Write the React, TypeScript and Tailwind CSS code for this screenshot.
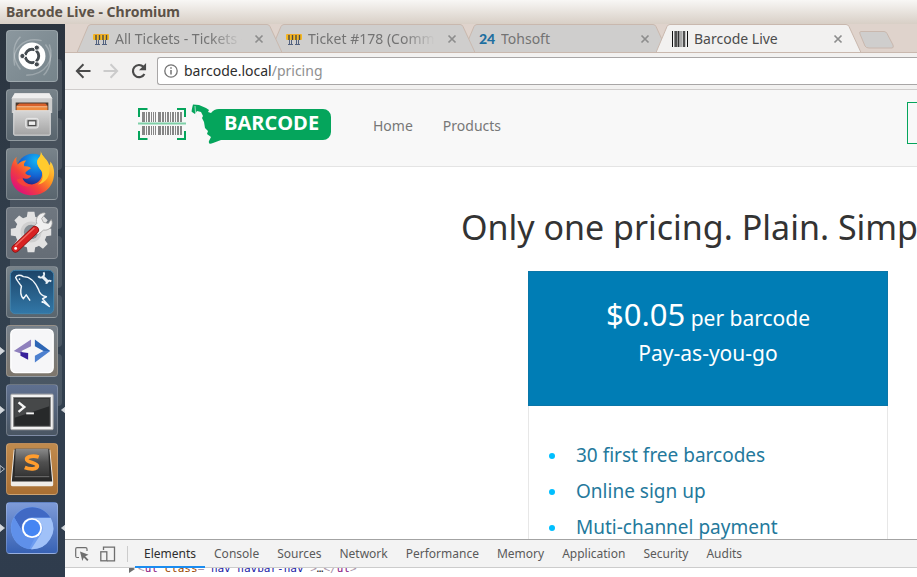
import type { ReactNode } from "react";

const uiFont = "font-['Noto_Sans','Open_Sans',sans-serif]";

/* ---------- Launcher icons ---------- */

function DashIcon() {
  return (
    <svg viewBox="0 0 52 52" className="size-full">
      <g fill="none" stroke="#ffffff" strokeOpacity="0.25" strokeWidth="1.500">
        <path d="M8 36C4 18 18 6 36 10" />
        <path d="M44 14c6 16-4 32-24 32" />
        <path d="M14 6C4 16 6 30 14 40" />
        <path d="M38 46c8-8 10-22 2-32" />
      </g>
      <circle cx="26" cy="26" r="14" fill="#fff" />
      <circle cx="26" cy="26" r="7" fill="none" stroke="#444b50" strokeWidth="3" />
      <path d="M26 26H15M26 26l6-10.400M26 26l6 10.400" stroke="#fff" strokeWidth="1.400" />
      <circle cx="26" cy="26" r="5" fill="#fff" />
      <g fill="#444b50" stroke="#fff" strokeWidth="1">
        <circle cx="16" cy="26" r="2.700" />
        <circle cx="31" cy="17.300" r="2.700" />
        <circle cx="31" cy="34.700" r="2.700" />
      </g>
    </svg>
  );
}

function FilesIcon() {
  return (
    <svg viewBox="0 0 52 52" className="size-full">
      <defs>
        <linearGradient id="drawer" x1="0" y1="0" x2="0" y2="1">
          <stop offset="0" stopColor="#d6d6d6" />
          <stop offset="1" stopColor="#a3a3a3" />
        </linearGradient>
      </defs>
      <path d="M8 3.500h36l3 5V24H5V8.500z" fill="#cdcdcd" />
      <path d="M8 3.500h36l3 5H5z" fill="#eeeeee" />
      <rect x="9" y="13" width="34" height="10" fill="#4a3b30" />
      <path d="M10 16l3-2h27l2 2v7H10z" fill="#d9622c" />
      <path d="M10 18h32v4H10z" fill="#f08a3c" />
      <path d="M10 17.500h32" stroke="#fbd2a2" />
      <rect x="7" y="21.500" width="38" height="25.500" rx="1" fill="url(#drawer)" stroke="#e2e2e2" />
      <rect x="19.500" y="29.500" width="13" height="10" rx="2" fill="#c9c9c9" stroke="#ececec" />
      <rect x="22" y="32" width="8" height="5" fill="#eee" stroke="#4c4c4c" strokeWidth="1.300" />
    </svg>
  );
}

function FirefoxIcon() {
  return (
    <svg viewBox="0 0 52 52" className="size-full">
      <defs>
        <linearGradient id="fox" x1="0.900" y1="0.100" x2="0.200" y2="0.900">
          <stop offset="0" stopColor="#ffe14a" />
          <stop offset="0.400" stopColor="#ff9a1f" />
          <stop offset="0.700" stopColor="#f4433a" />
          <stop offset="1" stopColor="#e01574" />
        </linearGradient>
        <radialGradient id="globe" cx="0.600" cy="0.200" r="0.800">
          <stop offset="0" stopColor="#12b5f5" />
          <stop offset="0.600" stopColor="#1463d2" />
          <stop offset="1" stopColor="#24237c" />
        </radialGradient>
      </defs>
      <circle cx="27" cy="22" r="17" fill="url(#globe)" />
      <path
        d="M35 2c1 4-1 6-3 9-2 4 1 8 4 12 2 6-2 13-10 14-5 0-9-3-10-7 3 2 7 1 9-2-1-1-4 0-6-3 1-2 3-3 6-5-2-2-5-2-7-2-1-2 0-4 2-6-4 0-7 2-9 4-1-2-2-4-1-8-3 3-5 7-6 14-2 15 7 26 22 26 14 0 23-10 23-23 0-4-1-9-4-12 0 2 0 3-1 4C43 11 36 8 35 2z"
        fill="url(#fox)"
      />
      <path d="M35 2c1 4-1 6-3 9-2 4 1 8 4 12 3 6 0 12-4 14 9-2 13-9 12-17C43 11 36 8 35 2z" fill="#ffcb2e" />
      <path d="M16 30c1 6 7 9 13 7-6 4-16 2-19-5z" fill="#f4433a" />
    </svg>
  );
}

function SettingsIcon() {
  const teeth = [0, 45, 90, 135, 180, 225, 270, 315];
  return (
    <svg viewBox="0 0 52 52" className="size-full">
      <g fill="#e2e2e2">
        {teeth.map((a) => (
          <path key={a} d="M21 13l1.500-9h7l1.500 9z" transform={`rotate(${a} 25 25) translate(-1 0)`} />
        ))}
        <circle cx="25" cy="25" r="16.500" />
      </g>
      <circle cx="25" cy="25" r="11" fill="#cfcfcf" />
      <circle cx="25" cy="25" r="7.500" fill="#858d93" />
      <path
        d="M26 21l5-5c-2-5 2-11 8-11l1 1-4 5 2 4 5 1 3-4c3 5-1 12-8 11l-6 5z"
        fill="#f0f0f0"
        stroke="#9b9b9b"
        strokeWidth="0.800"
      />
      <path d="M9 42L29 23" stroke="#8e1010" strokeWidth="8.500" strokeLinecap="round" />
      <path d="M9 42L29 23" stroke="#d82222" strokeWidth="7" strokeLinecap="round" />
      <path d="M9 39L28 21" stroke="#f06a60" strokeWidth="1.500" strokeLinecap="round" />
      <circle cx="9" cy="42" r="1.500" fill="#fff" />
    </svg>
  );
}

function WorkbenchIcon() {
  return (
    <svg viewBox="0 0 52 52" className="size-full">
      <defs>
        <linearGradient id="sea" x1="0" y1="0" x2="0" y2="1">
          <stop offset="0" stopColor="#1c4468" />
          <stop offset="1" stopColor="#3278a8" />
        </linearGradient>
      </defs>
      <rect x="3.500" y="3.500" width="45" height="45" rx="5" fill="url(#sea)" stroke="#3f82ac" />
      <path
        d="M24 35l-4-6-3 4c-3-3-3-9-2-13-2-3-5-6-6-9 1-3 5-3 8-1 8 0 13 7 16 14 1 4 4 6 8 7l-4 2 7 8-7-5-1 1"
        fill="none"
        stroke="#f2f7fb"
        strokeWidth="1.500"
        strokeLinejoin="round"
      />
      <circle cx="13" cy="12.500" r="0.900" fill="#f2f7fb" />
      <path d="M37 10l6 6" stroke="#e8eff5" strokeWidth="3" />
      <path d="M32.500 9.500a3 3 0 005.500-4M41 17.500a3 3 0 015-2.500" fill="none" stroke="#e8eff5" strokeWidth="2" />
    </svg>
  );
}

function CodeIcon() {
  return (
    <svg viewBox="0 0 52 52" className="size-full">
      <rect x="4" y="3.500" width="44" height="45" rx="5" fill="#f6f6f8" stroke="#fff" strokeWidth="1.500" />
      <path d="M25 14v7l-10 5 3 4-11-4z" fill="#8f80bd" />
      <path d="M14 27l8 1v7l-8-4z" fill="#38219b" />
      <path d="M29 14v7l9 5h7z" fill="#2d66b5" />
      <path d="M45 26h-7l-9 5v7z" fill="#4d80cf" />
    </svg>
  );
}

function TerminalIcon() {
  return (
    <svg viewBox="0 0 52 52" className="size-full">
      <rect x="4" y="9.500" width="44" height="37" rx="1" fill="#f2f2f2" stroke="#a8a8a8" />
      <rect x="7" y="13" width="38" height="30" fill="#27292a" stroke="#777" />
      <path d="M8 14h36v8L8 34z" fill="#464849" />
      <path d="M12 18l6 5-6 5" fill="none" stroke="#f6f6f6" strokeWidth="2.500" />
      <path d="M20 29.500h8" stroke="#f6f6f6" strokeWidth="2" />
    </svg>
  );
}

function SublimeIcon() {
  return (
    <svg viewBox="0 0 52 52" className="size-full">
      <defs>
        <linearGradient id="key" x1="0" y1="0" x2="0" y2="1">
          <stop offset="0" stopColor="#8a8a8a" />
          <stop offset="0.500" stopColor="#505050" />
          <stop offset="1" stopColor="#363636" />
        </linearGradient>
      </defs>
      <path d="M7 6h38l3 32v4a2 2 0 01-2 2H6a2 2 0 01-2-2v-4z" fill="#f0ede8" />
      <path d="M8 5h36l3 34H5z" fill="#292929" />
      <path d="M9 5h34l1 28H8z" fill="url(#key)" />
      <path d="M8 34h36" stroke="#777" />
      <path
        d="M33 13.500c-5-1.500-12-1-12.500 2-.5 4 11 3.500 11 7.500 0 3.500-8 3.500-13 1.500"
        fill="none"
        stroke="#ff9d2e"
        strokeWidth="4"
      />
    </svg>
  );
}

function ChromiumIcon() {
  return (
    <svg viewBox="0 0 52 52" className="size-full">
      <circle cx="26" cy="26" r="22" fill="#6d9cf0" />
      <path d="M7.500 15A22 22 0 0145 15H26a11 11 0 00-10 15z" fill="#4069c4" />
      <path d="M7.500 15L17 31a11 11 0 0012 5l-6 12A22 22 0 017.500 15z" fill="#5f90ea" />
      <path d="M26 15.500h19.500A22 22 0 0125 48l10.500-16A11 11 0 0026 15.500z" fill="#a0c1f8" />
      <circle cx="26" cy="26" r="10.500" fill="#fff" />
      <circle cx="26" cy="26" r="8.500" fill="#4585f3" />
    </svg>
  );
}

type Running = "none" | "open" | "focus" | "hollow";

function Marker({ side, hollow }: { side: "left" | "right"; hollow?: boolean }) {
  return (
    <svg
      viewBox="0 0 5 8"
      className={`absolute top-[22px] h-2 w-[5px] ${side === "left" ? "-left-[6px]" : "-right-[7px] rotate-180"}`}
    >
      <path d="M0 .5L4.500 4 0 7.500z" fill={hollow ? "none" : "#d5d9de"} stroke="#d5d9de" strokeWidth="0.800" />
    </svg>
  );
}

function Tile({ label, tone, running, trail, children }: { label: string; tone: string; running: Running; trail?: boolean; children: ReactNode }) {
  return (
    <li className="relative">
      <button
        aria-label={label}
        className={`block size-[52px] rounded-[4px] border border-white/20 ${tone} ${trail ? "shadow-[4px_29px_0_0_rgba(255,255,255,0.12)]" : ""}`}
      >
        {children}
      </button>
      {(running === "open" || running === "focus") && <Marker side="left" />}
      {running === "hollow" && <Marker side="left" hollow />}
      {running === "focus" && <Marker side="right" />}
    </li>
  );
}

function Launcher() {
  const glass = "bg-linear-to-b from-[#78838a] to-[#59656e]";
  return (
    <nav aria-label="Launcher" className="w-[65px] shrink-0 overflow-hidden bg-linear-to-b from-[#2b343f] via-[#33414f] to-[#2f3c4d] px-[6px] pt-[6px]">
      <ul className="flex flex-col gap-[7px]">
        <Tile label="Search your computer" tone="bg-linear-to-br from-[#8b979e] to-[#76848b]" running="none" trail><DashIcon /></Tile>
        <Tile label="Files" tone={glass} running="none" trail><FilesIcon /></Tile>
        <Tile label="Firefox" tone={glass} running="none" trail><FirefoxIcon /></Tile>
        <Tile label="System Settings" tone="bg-linear-to-b from-[#6f7780] to-[#656d76]" running="none" trail><SettingsIcon /></Tile>
        <Tile label="MySQL Workbench" tone={glass} running="none" trail><WorkbenchIcon /></Tile>
        <Tile label="Code editor" tone="bg-linear-to-b from-[#76808a] to-[#7d766c]" running="open" trail><CodeIcon /></Tile>
        <Tile label="Terminal" tone="bg-linear-to-b from-[#5f7090] to-[#4a5663]" running="focus"><TerminalIcon /></Tile>
        <Tile label="Sublime Text" tone="bg-linear-to-b from-[#c08b4e] to-[#a96f33]" running="hollow"><SublimeIcon /></Tile>
        <Tile label="Chromium" tone="bg-linear-to-b from-[#7e9bd8] to-[#3862b4]" running="focus"><ChromiumIcon /></Tile>
      </ul>
    </nav>
  );
}

/* ---------- Browser chrome ---------- */

function BarrierIcon() {
  return (
    <svg viewBox="0 0 16 16" className="size-4 shrink-0">
      <path d="M3.500 8v5.500M5.500 8v5.500M10.500 8v5.500M12.500 8v5.500M2 13.500h5M9 13.500h5" stroke="#53627f" fill="none" />
      <rect x="0" y="3" width="16" height="6" rx="1" fill="#f5b820" />
      <path d="M3 4v5M6.500 4v5M10 4v5M13.500 4v5" stroke="#4c4a48" strokeWidth="1.400" />
      <path d="M1 3.500h14" stroke="#f0a92a" />
    </svg>
  );
}

function BarcodeFavicon() {
  return (
    <svg viewBox="0 0 16 16" className="size-4 shrink-0">
      <rect width="16" height="16" fill="#c8c8c8" />
      <path d="M.5 0v16M15.500 0v16" stroke="#111" />
      <path d="M2.500 0v16M9 0v16" stroke="#8a8a8a" />
      <path d="M4 0v16M6.500 0v16M12 0v16" stroke="#333" strokeWidth="1.600" />
      <path d="M1.500 0v16M14.500 0v16" stroke="#f1f1f1" />
    </svg>
  );
}

function TextFavicon() {
  return <span className="w-4 shrink-0 font-['Lato',sans-serif] text-[14px] font-black leading-4 text-[#1d6ea0]">24</span>;
}

function Tab({ title, icon, active, order, fade }: { title: string; icon: ReactNode; active?: boolean; order: string; fade?: boolean }) {
  return (
    <div className={`relative -mr-3 flex h-[29px] w-[205px] shrink-0 items-center pl-4 pr-[18px] ${order}`}>
      <svg viewBox="0 0 205 29" className="absolute inset-0 size-full" preserveAspectRatio="none">
        <path
          d="M0 28.500L11 2.500Q12 .5 14 .5H190Q192 .5 193 2.500L205 28.500"
          fill={active ? "#f2f1f0" : "#cfcecd"}
          stroke="#c9b8ae"
        />
        {active && <path d="M1 28.500H204" stroke="#f2f1f0" />}
      </svg>
      <button role="tab" aria-selected={!!active} className="relative flex min-w-0 flex-1 items-center gap-[6px] text-left">
        {icon}
        <span
          className={`min-w-0 flex-1 overflow-hidden whitespace-nowrap text-[14px] leading-5 ${active ? "text-[#4c4c4c]" : "text-[#737373]"} ${fade ? "mask-r-from-75%" : ""}`}
        >
          {title}
        </span>
      </button>
      <button aria-label={`Close ${title}`} className="relative ml-3 size-[10px]">
        <svg viewBox="0 0 10 10" className="size-full">
          <path d="M1.500 1.500l7 7M8.500 1.500l-7 7" stroke="#8d8d8d" strokeWidth="1.700" />
        </svg>
      </button>
    </div>
  );
}

function TabStrip() {
  return (
    <div className="flex h-[29px] overflow-hidden border-b border-[#c9b8ae] bg-[#dfd3cc] pl-3">
      <div role="tablist" className="flex">
        <Tab title="All Tickets - Tickets - Support" icon={<BarrierIcon />} order="z-30" fade />
        <Tab title="Ticket #178 (Comment added)" icon={<BarrierIcon />} order="z-20" fade />
        <Tab title="Tohsoft" icon={<TextFavicon />} order="z-10" />
        <Tab title="Barcode Live" icon={<BarcodeFavicon />} active order="z-40" />
      </div>
      <button aria-label="New tab" className="ml-[10px] mt-[7px] h-[18px] w-[35px] shrink-0">
        <svg viewBox="0 0 35 18" className="size-full">
          <path d="M2 .5H25q2 0 3 2L34 14q1 3-1 3H10q-3 0-4-2L1 3Q0 .5 2 .5z" fill="#cfcecd" stroke="#c9b8ae" />
        </svg>
      </button>
    </div>
  );
}

function Toolbar() {
  return (
    <div className="flex h-[37px] items-center border-b border-[#cfcccb] bg-[#f2f1f0] pl-2">
      <button aria-label="Back" className="size-5">
        <svg viewBox="0 0 24 24" className="size-full" fill="#4a4a4a">
          <path d="M21 10.700H7.500l5.900-5.900L11.700 3 3 12l8.700 9 1.700-1.800-5.900-5.900H21z" />
        </svg>
      </button>
      <button aria-label="Forward" className="ml-2 size-5">
        <svg viewBox="0 0 24 24" className="size-full" fill="#cbcbcb">
          <path d="M3 10.700h13.500l-5.900-5.900L12.300 3l8.700 9-8.700 9-1.700-1.800 5.900-5.900H3z" />
        </svg>
      </button>
      <button aria-label="Reload" className="ml-2 size-5">
        <svg viewBox="0 0 24 24" className="size-full" fill="none">
          <path d="M18.500 15.500A7.300 7.300 0 1117.300 7" stroke="#4a4a4a" strokeWidth="2.600" />
          <path d="M20.500 2.500V11H12z" fill="#4a4a4a" />
        </svg>
      </button>
      <div className="ml-2 flex h-7 flex-1 items-center rounded-l-[3px] border border-r-0 border-[#a8a6a6] bg-white pl-[6px]">
        <svg viewBox="0 0 14 14" className="size-[14px]" fill="none">
          <circle cx="7" cy="7" r="6.200" stroke="#737373" strokeWidth="1.300" />
          <path d="M7 6v4.500M7 3.300v1.500" stroke="#737373" strokeWidth="1.500" />
        </svg>
        <div role="textbox" aria-label="Address" contentEditable suppressContentEditableWarning className="ml-[6px] flex-1 text-[14px] leading-5 text-[#2e2e2e]">
          barcode.local<span className="text-[#8f8f8f]">/pricing</span>
        </div>
      </div>
    </div>
  );
}

/* ---------- Web page ---------- */

function Logo() {
  const bars: [number, number][] = [
    [4, 3], [8, 1], [10, 2], [13, 1], [15, 1], [17, 1], [20, 3], [24, 2], [27, 1], [29, 2],
    [32, 1], [34, 2], [37, 1], [39, 2], [42, 2],
  ];
  return (
    <a href="#" className="relative block h-10 w-[194px]">
      <svg viewBox="0 0 194 40" className="absolute inset-0 size-full">
        <g fill="#868686">
          {bars.map(([x, w]) => (
            <path key={x} d={`M${x} 8h${w}v10h-${w}zM${x} 22h${w}v9h-${w}z`} />
          ))}
        </g>
        <path d="M9.500 5H1v8M39 5h8v8M1 27v8h8.500M47 27v8h-8" fill="none" stroke="#05a55c" strokeWidth="2" />
        <path d="M0 19.500h48" stroke="#7fd0a8" strokeWidth="2" />
        <path
          d="M55 .5l6 .5 7 3 3 2-1 2 3 1q3-4 8-4h104a8 8 0 018 8v15a8 8 0 01-8 8H83l-8 3q-5 2-4-2l2-4-4-3 1-3-3-3-1-6-2-4 1-2-2-4-4-1-2 3-3-2Q53 8 55 .5z"
          fill="#05a55c"
        />
        <path d="M57 2q0 7 2 12" fill="none" stroke="#eaf7f0" strokeWidth="0.700" />
      </svg>
      <span className="absolute left-[86px] top-[7px] font-['Open_Sans',sans-serif] text-[20px] font-bold leading-6 text-white">BARCODE</span>
    </a>
  );
}

function Page() {
  return (
    <div className="min-h-0 flex-1 overflow-hidden bg-white">
      <div className="min-w-[1286px]">
        <header className="border-b border-[#e4e4e4] bg-[#f8f8f8]">
          <div className="mx-auto flex h-[76px] w-[1140px] items-center">
            <div className="-mt-2"><Logo /></div>
            <nav className="-mt-1 ml-[41px] flex gap-[30px] text-[14px] leading-5 text-[#777]">
              <a href="#">Home</a>
              <a href="#">Products</a>
            </nav>
            <a href="#" aria-label="Account" className="-mt-[10px] ml-auto h-[42px] w-[371px] border border-[#05a55c]" />
          </div>
        </header>
        <main className="pt-9">
          <h1 className="text-center text-[34px] leading-[48px] text-[#333]">Only one pricing. Plain. Simple.</h1>
          <section className="mx-auto mt-5 w-[360px]">
            <div className="h-[135px] border border-[#0a76a8] bg-[#007db5] pt-[23px] text-center text-[21px] text-white">
              <p className="leading-[38px]"><span className="text-[31px]">$0.05</span> per barcode</p>
              <p className="leading-8">Pay-as-you-go</p>
            </div>
            <ul className="border-x border-[#e7e7e7] pl-5 pt-[31px] text-[19px] leading-9 text-[#24799c]">
              {["30 first free barcodes", "Online sign up", "Muti-channel payment"].map((t) => (
                <li key={t} className="flex items-center gap-[21px]">
                  <span className="mt-[2px] size-[6px] rounded-full bg-[#00bfff]" />
                  {t}
                </li>
              ))}
            </ul>
          </section>
        </main>
      </div>
    </div>
  );
}

/* ---------- Developer tools ---------- */

function DevTools() {
  const tabs = ["Elements", "Console", "Sources", "Network", "Performance", "Memory", "Application", "Security", "Audits"];
  return (
    <div className="shrink-0 border-t border-[#a3a3a3] bg-white">
      <div className="flex h-7 items-center border-b border-[#ccc] bg-[#f3f3f3] pl-[10px]">
        <button aria-label="Inspect element" className="size-[14px]">
          <svg viewBox="0 0 14 14" className="size-full" fill="none">
            <path d="M4 10.500H2Q.7 10.500.7 9V2Q.7.7 2 .7h8.500q1.500 0 1.500 1.300v2" stroke="#6e6e6e" strokeWidth="1.200" />
            <path d="M5 4.500l8.500 3.300-3.300 1.500 3.300 3.400-1.300 1.300-3.400-3.400L7.300 14z" fill="#6e6e6e" />
          </svg>
        </button>
        <button aria-label="Toggle device toolbar" className="ml-[11px] size-4">
          <svg viewBox="0 0 16 16" className="size-full" fill="none" stroke="#6e6e6e" strokeWidth="1.300">
            <path d="M3.500 4V1.200h11v13.600H7" />
            <rect x=".8" y="5.800" width="6" height="9" />
          </svg>
        </button>
        <span className="ml-[11px] h-4 w-px bg-[#ccc]" />
        <div role="tablist" className="ml-[7px] flex h-full text-[12px] leading-4 text-[#5a5a5a]">
          {tabs.map((t, i) => (
            <button key={t} role="tab" aria-selected={i === 0} className={`h-7 border-b-2 px-[9px] pt-px ${i === 0 ? "border-[#1a8cf0] text-[#2e2e2e]" : "border-transparent"}`}>
              {t}
            </button>
          ))}
        </div>
      </div>
      <div className="flex h-[9px] items-end overflow-hidden pl-16">
        <code className="flex items-center font-['DejaVu_Sans_Mono',monospace] text-[11px] leading-4 text-[#a894a6]">
          <svg viewBox="0 0 6 8" className="mr-[3px] h-2 w-[6px]"><path d="M0 0l6 4-6 4z" fill="#6e6e6e" /></svg>
          <span>
            &lt;<span className="text-[#881280]">ul</span> <span className="text-[#994500]">class</span>="
            <span className="text-[#1a1aa6]">nav navbar-nav</span>"&gt;<span className="text-[#333]">…</span>&lt;/<span className="text-[#881280]">ul</span>&gt;
          </span>
        </code>
      </div>
    </div>
  );
}

export default function App() {
  return (
    <div className={`flex h-screen flex-col overflow-hidden ${uiFont}`}>
      <div className="flex h-6 shrink-0 items-center bg-linear-to-b from-[#f8f7f5] to-[#d8cfc6] pl-[6px] text-[14px] font-bold leading-6 text-[#5c5248]">
        Barcode Live - Chromium
      </div>
      <div className="flex min-h-0 flex-1">
        <Launcher />
        <div className="flex min-w-0 flex-1 flex-col">
          <TabStrip />
          <Toolbar />
          <Page />
          <DevTools />
        </div>
      </div>
    </div>
  );
}
